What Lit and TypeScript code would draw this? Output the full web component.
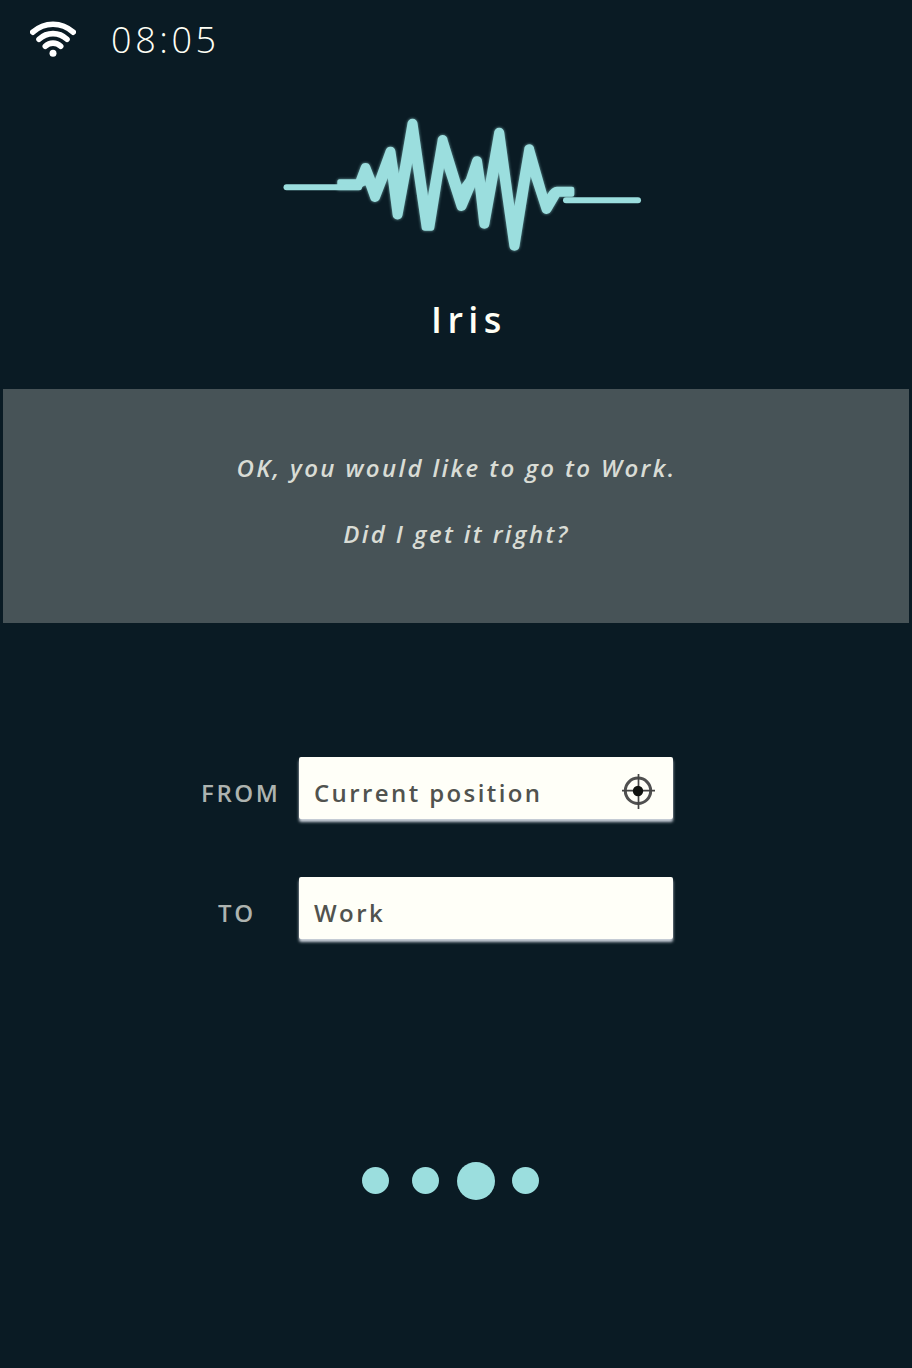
import { LitElement, html, css } from "lit";
import { customElement, property } from "lit/decorators.js";

@customElement("status-bar")
class StatusBar extends LitElement {
  static styles = css`
    :host { display: flex; align-items: flex-start; height: 80px; padding: 0 30px; box-sizing: border-box; }
    .wifi { width: 46px; height: 38px; margin-top: 20px; flex: none; }
    .time { margin: 15px 0 0 35px; font-weight: 300; font-size: 36px; line-height: 49px; letter-spacing: 3.6px; color: #fffff5; }
  `;
  render() {
    return html`
      <svg class="wifi" viewBox="30 20 46 38" fill="none" stroke="#fff" stroke-width="5.6" stroke-linecap="round">
        <path d="M32.8 32.2C44.500 21.600 61.500 21.600 73.200 32.200" />
        <path d="M39 39.300C47 31.700 59 31.700 67 39.300" />
        <path d="M45.300 46.300C49.700 42 56.300 42 60.700 46.300" />
        <circle cx="53" cy="53.300" r="3.500" fill="#fff" stroke="none" />
      </svg>
      <div class="time">08:05</div>
    `;
  }
}

@customElement("voice-wave")
class VoiceWave extends LitElement {
  static styles = css`
    :host { display: block; }
    svg { display: block; width: 380px; height: 160px; overflow: visible; }
    .glow { filter: drop-shadow(0 0 1.5px rgba(155, 223, 223, 0.7)); }
  `;
  render() {
    // The upper contour runs left to right, the lower contour back again.
    const outline = `M337.3 182Q337.300 179.200 339.500 179.200H356
      L360.800 166.500A5 5 0 0 1 370.300 166.500L375.200 179
      L385.600 150.500A5 5 0 0 1 395.400 151L398.800 173.500
      L407.400 123.800A5.100 5.100 0 0 1 417.600 123.800L428 196
      L437.600 140.300A5 5 0 0 1 447.600 139.800L461.500 184.800L466 178.500
      L472.300 159.500A5 5 0 0 1 482 160.700L485.300 183
      L494.100 132.800A5.100 5.100 0 0 1 504.300 132.800L514.400 206.300
      L524.200 149.300A5 5 0 0 1 534.200 149L547.200 194.500
      Q551.500 186.700 557 186.700H572Q574.300 186.700 574.300 189V194.500Q574.300 196.800 572 196.800H559.500
      L551 211.300A5 5 0 0 1 541.700 210.300L530.700 176.500
      L519.500 246.300A5.100 5.100 0 0 1 509.400 246.300L498.800 172
      L489.400 224.300A5.100 5.100 0 0 1 479.300 224.300L475 187
      L466 208.300A5 5 0 0 1 456.800 207.800L444 168
      L434.300 228Q433.900 230.800 431.500 230.800H425Q422 230.800 421.700 228L412.200 163
      L402.500 215.300A5 5 0 0 1 392.600 214.800L387.800 178
      L379.500 199.200A5 5 0 0 1 370.300 198.500L365.700 185.500
      Q362.500 185.500 360 190H338Q337.300 190 337.300 188Z`;
    return html`
      <svg viewBox="270 100 380 160" fill="none" stroke="#9bdede">
        <path class="glow" d=${outline} fill="#9bdede" stroke="none" />
        <g stroke-width="6" stroke-linecap="round">
          <path d="M286.500 187.200H359" />
          <path d="M566 200.300H638" />
        </g>
      </svg>
    `;
  }
}

@customElement("route-field")
class RouteField extends LitElement {
  @property() label = "";
  @property() value = "";
  @property({ type: Boolean }) locate = false;

  static styles = css`
    :host { display: grid; grid-template-columns: 127px 374px; align-items: start; }
    .label { padding: 19px 0 0 46px; line-height: 33px; color: #adb3b0; letter-spacing: 2.6px; }
    .label.long { padding-left: 29px; }
    .box {
      display: flex; justify-content: space-between; height: 62px; box-sizing: border-box;
      padding: 0 17px 0 15px; background: #fffff8; border-radius: 2px;
      box-shadow: 0 3px 3px rgba(225, 231, 240, 0.9);
    }
    .value { line-height: 33px; padding-top: 19px; color: #51534f; letter-spacing: 2.4px; }
    .target { width: 35px; height: 36px; margin-top: 16px; }
  `;
  render() {
    return html`
      <div class=${this.label.length > 2 ? "label long" : "label"}>${this.label}</div>
      <div class="box">
        <div class="value">${this.value}</div>
        ${this.locate
          ? html`<svg class="target" viewBox="621 773 35 36" fill="none" stroke="#505050">
              <circle cx="638" cy="790.800" r="12.700" stroke-width="3" />
              <path d="M622 790.600H655M638.500 774V809" stroke="#444" stroke-width="1.700" />
              <circle cx="638" cy="791" r="5.200" fill="#10120f" stroke="none" />
            </svg>`
          : null}
      </div>
    `;
  }
}

@customElement("app-root")
class AppRoot extends LitElement {
  static styles = css`
    :host {
      display: flex; flex-direction: column; width: 912px; height: 1368px; overflow: hidden;
      background: #0a1b24; font-family: "Open Sans", "Noto Sans", sans-serif; font-size: 24px; font-weight: 600;
      -webkit-font-smoothing: antialiased;
    }
    voice-wave { margin: 20px 0 0 270px; }
    .name { margin: 35px 0 0 431px; font-size: 36px; line-height: 49px; letter-spacing: 5.4px; color: #fffff5; }
    .prompt {
      height: 234px; margin: 45px 3px 0; padding: 46px 0 0 1px; box-sizing: border-box;
      background: #475357; color: #d9dcd5; text-align: center; font-style: italic; letter-spacing: 2.37px;
    }
    .prompt p { margin: 0; line-height: 66px; }
    .form { display: flex; flex-direction: column; gap: 58px; margin: 134px 0 0 172px; }
    .pager { display: flex; align-items: center; margin: 223px 0 0 362px; height: 38px; }
    .dot { width: 27px; height: 27px; margin-right: 23px; margin-bottom: 1px; border-radius: 50%; background: #9bdede; }
    .dot.active { width: 38px; height: 38px; margin: 0 17px 0 -5px; }
  `;
  render() {
    return html`
      <status-bar></status-bar>
      <voice-wave></voice-wave>
      <div class="name">Iris</div>
      <section class="prompt">
        <p>OK, you would like to go to Work.</p>
        <p>Did I get it right?</p>
      </section>
      <section class="form">
        <route-field label="FROM" value="Current position" locate></route-field>
        <route-field label="TO" value="Work"></route-field>
      </section>
      <nav class="pager">
        ${[0, 1, 2, 3].map((i) => html`<span class=${i === 2 ? "dot active" : "dot"}></span>`)}
      </nav>
    `;
  }
}
